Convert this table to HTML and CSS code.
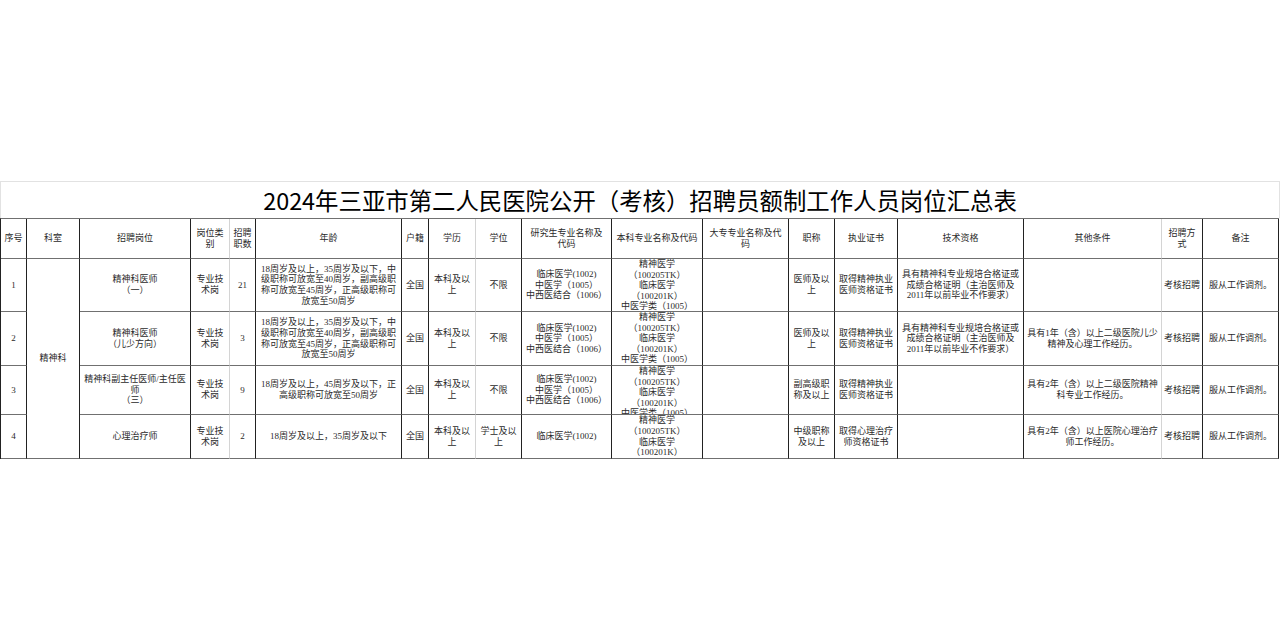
FILE: index.html
```html
<!DOCTYPE html>
<html lang="zh-CN">
<head>
<meta charset="utf-8">
<title>2024年三亚市第二人民医院岗位汇总表</title>
<link rel="stylesheet" href="styles.css">
</head>
<body>
<main class="page">
  <div class="title">2024年三亚市第二人民医院公开（考核）招聘员额制工作人员岗位汇总表</div>
  <div class="grid">
    <div class="c">序号</div>
    <div class="c">科室</div>
    <div class="c">招聘岗位</div>
    <div class="c lt">岗位类<br>别</div>
    <div class="c">招聘<br>职数</div>
    <div class="c">年龄</div>
    <div class="c">户籍</div>
    <div class="c lt">学历</div>
    <div class="c">学位</div>
    <div class="c">研究生专业名称及<br>代码</div>
    <div class="c">本科专业名称及代码</div>
    <div class="c">大专专业名称及代<br>码</div>
    <div class="c">职称</div>
    <div class="c">执业证书</div>
    <div class="c">技术资格</div>
    <div class="c lt">其他条件</div>
    <div class="c">招聘方<br>式</div>
    <div class="c">备注</div>

    <div class="c">1</div>
    <div class="c dept">精神科</div>
    <div class="c">精神科医师<br>（一）</div>
    <div class="c lt">专业技<br>术岗</div>
    <div class="c">21</div>
    <div class="c">18周岁及以上，35周岁及以下，中<br>级职称可放宽至40周岁，副高级职<br>称可放宽至45周岁，正高级职称可<br>放宽至50周岁</div>
    <div class="c">全国</div>
    <div class="c lt">本科及以<br>上</div>
    <div class="c">不限</div>
    <div class="c">临床医学(1002)<br>中医学（1005）<br>中西医结合（1006）</div>
    <div class="c">精神医学<br>（100205TK）<br>临床医学<br>（100201K）<br>中医学类（1005）</div>
    <div class="c"></div>
    <div class="c">医师及以<br>上</div>
    <div class="c">取得精神执业<br>医师资格证书</div>
    <div class="c">具有精神科专业规培合格证或<br>成绩合格证明（主治医师及<br>2011年以前毕业不作要求）</div>
    <div class="c lt"></div>
    <div class="c">考核招聘</div>
    <div class="c">服从工作调剂。</div>

    <div class="c">2</div>
    <div class="c">精神科医师<br>（儿少方向）</div>
    <div class="c lt">专业技<br>术岗</div>
    <div class="c">3</div>
    <div class="c">18周岁及以上，35周岁及以下，中<br>级职称可放宽至40周岁，副高级职<br>称可放宽至45周岁，正高级职称可<br>放宽至50周岁</div>
    <div class="c">全国</div>
    <div class="c lt">本科及以<br>上</div>
    <div class="c">不限</div>
    <div class="c">临床医学(1002)<br>中医学（1005）<br>中西医结合（1006）</div>
    <div class="c">精神医学<br>（100205TK）<br>临床医学<br>（100201K）<br>中医学类（1005）</div>
    <div class="c"></div>
    <div class="c">医师及以<br>上</div>
    <div class="c">取得精神执业<br>医师资格证书</div>
    <div class="c">具有精神科专业规培合格证或<br>成绩合格证明（主治医师及<br>2011年以前毕业不作要求）</div>
    <div class="c lt">具有1年（含）以上二级医院儿少<br>精神及心理工作经历。</div>
    <div class="c">考核招聘</div>
    <div class="c">服从工作调剂。</div>

    <div class="c">3</div>
    <div class="c">精神科副主任医师/主任医<br>师<br>（三）</div>
    <div class="c lt">专业技<br>术岗</div>
    <div class="c">9</div>
    <div class="c">18周岁及以上，45周岁及以下，正<br>高级职称可放宽至50周岁</div>
    <div class="c">全国</div>
    <div class="c lt">本科及以<br>上</div>
    <div class="c">不限</div>
    <div class="c">临床医学(1002)<br>中医学（1005）<br>中西医结合（1006）</div>
    <div class="c">精神医学<br>（100205TK）<br>临床医学<br>（100201K）<br>中医学类（1005）</div>
    <div class="c"></div>
    <div class="c">副高级职<br>称及以上</div>
    <div class="c">取得精神执业<br>医师资格证书</div>
    <div class="c"></div>
    <div class="c lt">具有2年（含）以上二级医院精神<br>科专业工作经历。</div>
    <div class="c">考核招聘</div>
    <div class="c">服从工作调剂。</div>

    <div class="c">4</div>
    <div class="c">心理治疗师</div>
    <div class="c lt">专业技<br>术岗</div>
    <div class="c">2</div>
    <div class="c">18周岁及以上，35周岁及以下</div>
    <div class="c">全国</div>
    <div class="c lt">本科及以<br>上</div>
    <div class="c">学士及以<br>上</div>
    <div class="c">临床医学(1002)</div>
    <div class="c">精神医学<br>（100205TK）<br>临床医学<br>（100201K）</div>
    <div class="c"></div>
    <div class="c">中级职称<br>及以上</div>
    <div class="c">取得心理治疗<br>师资格证书</div>
    <div class="c"></div>
    <div class="c lt">具有2年（含）以上医院心理治疗<br>师工作经历。</div>
    <div class="c">考核招聘</div>
    <div class="c">服从工作调剂。</div>
  </div>
</main>
</body>
</html>
```

FILE: styles.css
```css
html, body {
  margin: 0;
  background: #ffffff;
}

body {
  font-family: "Liberation Serif", "Noto Sans CJK SC", serif;
  color: #2a2a2a;
}

.page {
  padding-top: 181px;
  width: 1280px;
}

.title {
  box-sizing: border-box;
  width: 1280px;
  height: 37px;
  border: 1px solid #e2e2e2;
  border-bottom: none;
  display: flex;
  align-items: center;
  justify-content: center;
  font-family: "Noto Sans CJK SC", sans-serif;
  font-size: 23.4px;
  font-weight: 400;
  color: #000000;
}

.grid {
  display: grid;
  grid-template-columns: 26px 53px 111px 39px 26px 146px 27px 47px 46px 90px 91px 86px 46px 63px 126px 138px 41px 76px;
  grid-template-rows: 40px 53px 54px 49px 44px;
  width: max-content;
  border-top: 1px solid #707070;
  border-left: 1px solid #222222;
}

.c {
  border-right: 1px solid #222222;
  border-bottom: 1px solid #707070;
  display: flex;
  align-items: safe center;
  justify-content: center;
  text-align: center;
  overflow: hidden;
  font-size: 9px;
  line-height: 10.6px;
  white-space: nowrap;
}

.c.lt {
  border-right-color: #d4d4d4;
}

.dept {
  grid-row: span 4;
}
```
